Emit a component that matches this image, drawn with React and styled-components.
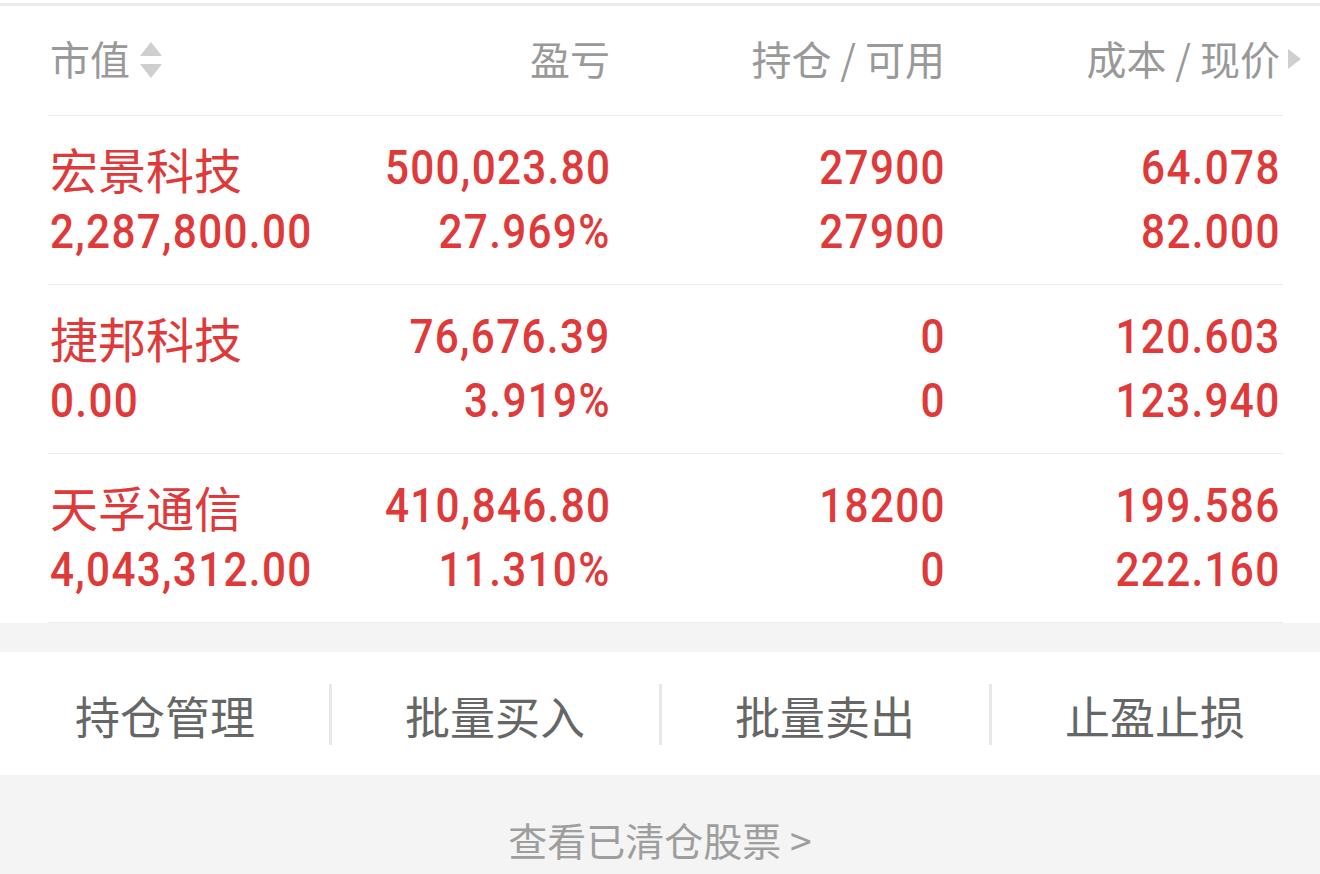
import React from 'react'
import styled, { createGlobalStyle } from 'styled-components'

const GlobalStyle = createGlobalStyle`
  html, body {
    margin: 0;
    padding: 0;
    background: #f4f4f4;
  }
  body {
    font-family: 'Noto Sans CJK SC', 'Noto Sans', sans-serif;
  }
`

const Page = styled.div`
  width: 1320px;
  height: 874px;
  overflow: hidden;
  background: #f4f4f4;
`

const Panel = styled.div`
  background: #fff;
  padding-top: 3px;
`

const TopLine = styled.div`
  height: 3px;
  background: #ebebeb;
`

const Row = styled.div`
  display: grid;
  grid-template-columns: minmax(0, 1fr) repeat(3, 335px);
  margin: 0 37px 0 48px;
  padding: 0 3px 0 2px;
  border-bottom: 1px solid #ececec;
`

const HeadRow = styled(Row)`
  align-items: center;
  padding-bottom: 5px;
  box-sizing: border-box;
  height: 110px;
`

const HeadCell = styled.div`
  display: flex;
  align-items: center;
  justify-content: ${p => (p.$left ? 'flex-start' : 'flex-end')};
  font-size: 40px;
  color: #999;
  white-space: pre;
`

const SortIcon = styled.span`
  display: inline-flex;
  flex-direction: column;
  gap: 8px;
  margin-left: 10px;
  margin-top: 4px;
`

const Arrow = styled.span`
  display: block;
  width: 0;
  height: 0;
  border-left: 11px solid transparent;
  border-right: 11px solid transparent;
  border-${p => (p.$down ? 'top' : 'bottom')}: 14px solid #cfcfcf;
`

const NextIcon = styled.span`
  display: block;
  width: 0;
  height: 0;
  border-top: 10px solid transparent;
  border-bottom: 10px solid transparent;
  border-left: 13px solid #cfcfcf;
  margin-left: 8px;
  margin-right: -21px;
  margin-top: 2px;
`

const StockRow = styled(Row)`
  padding-top: 20px;
  padding-bottom: 20px;
`

const Cell = styled.div`
  display: flex;
  flex-direction: column;
  align-items: ${p => (p.$left ? 'flex-start' : 'flex-end')};
  white-space: nowrap;
`

const Name = styled.div`
  height: 64px;
  line-height: 64px;
  font-size: 48px;
  color: #e0393a;
`

const Num = styled.div`
  height: 64px;
  line-height: 64px;
  font-family: Roboto, 'Liberation Sans', sans-serif;
  font-size: 48px;
  font-weight: 500;
  letter-spacing: 1.5px;
  color: #e0393a;
  transform: scaleX(0.88);
  transform-origin: ${p => (p.$left ? 'left' : 'right')} center;
  margin-right: ${p => (p.$left ? '0' : '-1px')};
`

const Gap = styled.div`
  height: 29px;
`

const ActionBar = styled.div`
  display: grid;
  grid-template-columns: repeat(4, 1fr);
  height: 123px;
  background: #fff;
`

const Action = styled.div`
  display: flex;
  align-items: center;
  justify-content: center;
  position: relative;
  font-size: 45px;
  color: #666;
  padding-top: 4px;

  & + &::before {
    content: '';
    position: absolute;
    left: -1px;
    top: 32px;
    height: 61px;
    width: 3px;
    background: #e8e8e8;
  }
`

const Footer = styled.div`
  text-align: center;
  padding-top: 36px;
  font-size: 39px;
  color: #9e9e9e;
`

const stocks = [
  { name: '宏景科技', value: '2,287,800.00', pnl: '500,023.80', pct: '27.969%', hold: '27900', avail: '27900', cost: '64.078', price: '82.000' },
  { name: '捷邦科技', value: '0.00', pnl: '76,676.39', pct: '3.919%', hold: '0', avail: '0', cost: '120.603', price: '123.940' },
  { name: '天孚通信', value: '4,043,312.00', pnl: '410,846.80', pct: '11.310%', hold: '18200', avail: '0', cost: '199.586', price: '222.160' },
]

const actions = ['持仓管理', '批量买入', '批量卖出', '止盈止损']

export default function App() {
  return (
    <Page>
      <GlobalStyle />
      <Panel>
        <TopLine />
        <HeadRow>
          <HeadCell $left>
            市值
            <SortIcon>
              <Arrow />
              <Arrow $down />
            </SortIcon>
          </HeadCell>
          <HeadCell>盈亏</HeadCell>
          <HeadCell>持仓 / 可用</HeadCell>
          <HeadCell>
            成本 / 现价
            <NextIcon />
          </HeadCell>
        </HeadRow>
        {stocks.map(s => (
          <StockRow key={s.name}>
            <Cell $left>
              <Name>{s.name}</Name>
              <Num $left>{s.value}</Num>
            </Cell>
            <Cell>
              <Num>{s.pnl}</Num>
              <Num>{s.pct}</Num>
            </Cell>
            <Cell>
              <Num>{s.hold}</Num>
              <Num>{s.avail}</Num>
            </Cell>
            <Cell>
              <Num>{s.cost}</Num>
              <Num>{s.price}</Num>
            </Cell>
          </StockRow>
        ))}
      </Panel>
      <Gap />
      <ActionBar>
        {actions.map(a => (
          <Action key={a}>{a}</Action>
        ))}
      </ActionBar>
      <Footer>查看已清仓股票 &gt;</Footer>
    </Page>
  )
}
